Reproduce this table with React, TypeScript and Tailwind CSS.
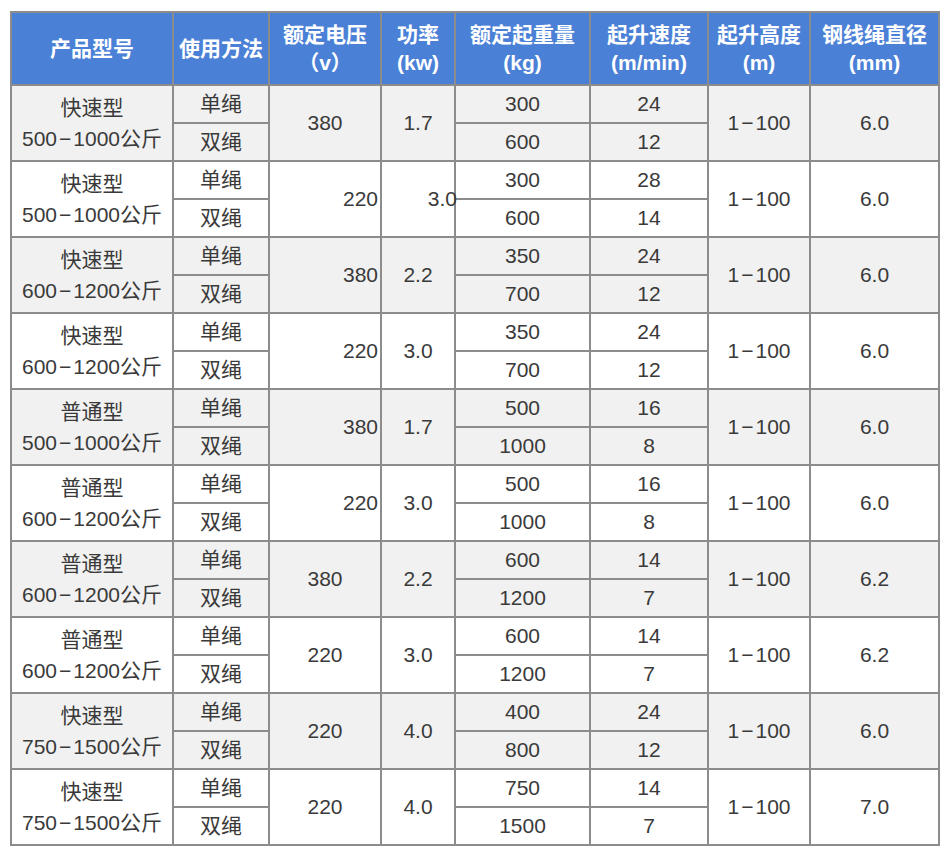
const rows = [
  { type: "快速型", range: "500−1000公斤", v: "380", kw: "1.7", kg: ["300", "600"], sp: ["24", "12"], d: "6.0", va: "c", pa: "c" },
  { type: "快速型", range: "500−1000公斤", v: "220", kw: "3.0", kg: ["300", "600"], sp: ["28", "14"], d: "6.0", va: "r", pa: "x" },
  { type: "快速型", range: "600−1200公斤", v: "380", kw: "2.2", kg: ["350", "700"], sp: ["24", "12"], d: "6.0", va: "r", pa: "c" },
  { type: "快速型", range: "600−1200公斤", v: "220", kw: "3.0", kg: ["350", "700"], sp: ["24", "12"], d: "6.0", va: "r", pa: "c" },
  { type: "普通型", range: "500−1000公斤", v: "380", kw: "1.7", kg: ["500", "1000"], sp: ["16", "8"], d: "6.0", va: "r", pa: "c" },
  { type: "普通型", range: "600−1200公斤", v: "220", kw: "3.0", kg: ["500", "1000"], sp: ["16", "8"], d: "6.0", va: "r", pa: "c" },
  { type: "普通型", range: "600−1200公斤", v: "380", kw: "2.2", kg: ["600", "1200"], sp: ["14", "7"], d: "6.2", va: "c", pa: "c" },
  { type: "普通型", range: "600−1200公斤", v: "220", kw: "3.0", kg: ["600", "1200"], sp: ["14", "7"], d: "6.2", va: "c", pa: "c" },
  { type: "快速型", range: "750−1500公斤", v: "220", kw: "4.0", kg: ["400", "800"], sp: ["24", "12"], d: "6.0", va: "c", pa: "c" },
  { type: "快速型", range: "750−1500公斤", v: "220", kw: "4.0", kg: ["750", "1500"], sp: ["14", "7"], d: "7.0", va: "c", pa: "c" },
];

const headers = [
  ["产品型号"],
  ["使用方法"],
  ["额定电压", "（v）"],
  ["功率", "(kw)"],
  ["额定起重量", "(kg)"],
  ["起升速度", "(m/min)"],
  ["起升高度", "(m)"],
  ["钢线绳直径", "(mm)"],
];

const widths = [162, 96, 112, 74, 135, 118, 102, 129];

const cell = "border-2 border-[#8c8c8c] p-0 text-center align-middle";

// the dash in the ranges is drawn wider than a plain hyphen
function Range({ text }: { text: string }) {
  const [a, b] = text.split("−");
  return (
    <>
      {a}
      <span className="px-[2px]">−</span>
      {b}
    </>
  );
}

export default function App() {
  return (
    <div className="min-h-[860px] bg-white pt-[11px] pl-[10px] font-['Liberation_Sans','Noto_Sans_CJK_SC',sans-serif] text-[21px] text-[#3a3a3a]">
      <table className="table-fixed border-collapse w-[930px]">
        <colgroup>
          {widths.map((w, i) => (
            <col key={i} style={{ width: w }} />
          ))}
        </colgroup>
        <thead>
          <tr className="h-[73px] bg-[#4a80d6]">
            {headers.map((h, i) => (
              <th key={i} className={`${cell} text-[21px] font-bold leading-[28px] text-white`}>
                {h.map((line) => (
                  <div key={line}>{line}</div>
                ))}
              </th>
            ))}
          </tr>
        </thead>
        <tbody>
          {rows.map((r, i) => {
            const bg = i % 2 === 0 ? "bg-[#f1f1f1]" : "bg-white";
            return [0, 1].map((s) => (
              <tr key={`${i}-${s}`} className={`h-[38px] ${bg}`}>
                {s === 0 && (
                  <td rowSpan={2} className={`${cell} leading-[31px]`}>
                    <div>{r.type}</div>
                    <div>
                      <Range text={r.range} />
                    </div>
                  </td>
                )}
                <td className={cell}>{s === 0 ? "单绳" : "双绳"}</td>
                {s === 0 && (
                  <td rowSpan={2} className={`${cell} ${r.va === "r" ? "text-right pr-[2px]" : ""}`}>
                    {r.v}
                  </td>
                )}
                {s === 0 && (
                  <td rowSpan={2} className={`${cell} ${r.pa === "x" ? "text-right" : ""}`}>
                    {r.pa === "x" ? <span className="relative left-[3px]">{r.kw}</span> : r.kw}
                  </td>
                )}
                <td className={cell}>{r.kg[s]}</td>
                <td className={cell}>{r.sp[s]}</td>
                {s === 0 && (
                  <td rowSpan={2} className={cell}>
                    <Range text="1−100" />
                  </td>
                )}
                {s === 0 && (
                  <td rowSpan={2} className={cell}>
                    {r.d}
                  </td>
                )}
              </tr>
            ));
          })}
        </tbody>
      </table>
    </div>
  );
}
